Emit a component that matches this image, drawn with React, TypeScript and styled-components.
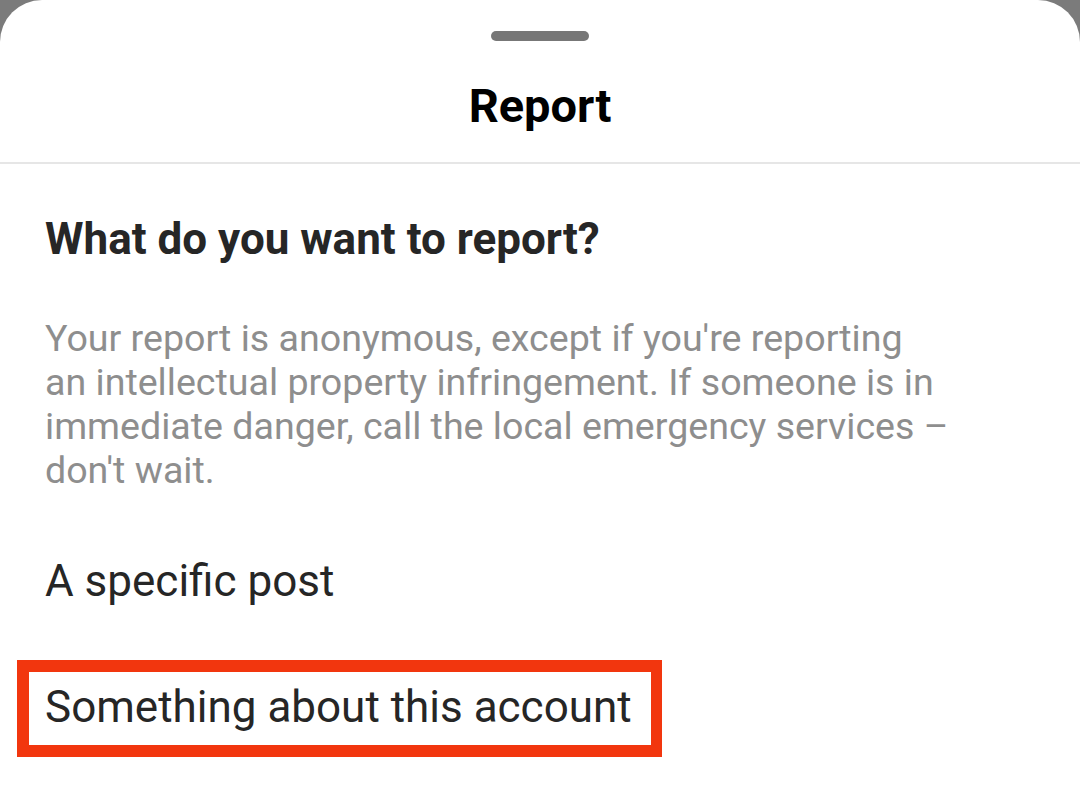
import React from "react";
import styled, { createGlobalStyle } from "styled-components";

const Global = createGlobalStyle`
  html, body { margin: 0; padding: 0; background: #7b7b7b; }
  body { font-family: Roboto, "Noto Sans", Arial, sans-serif; }
  * { box-sizing: border-box; }
`;

const Sheet = styled.div`
  width: 1080px;
  height: 806px;
  background: #ffffff;
  border-radius: 42px 42px 0 0;
  overflow: hidden;
  display: flex;
  flex-direction: column;
`;

const Header = styled.div`
  display: flex;
  flex-direction: column;
  align-items: center;
  height: 164px;
  padding-top: 31px;
  border-bottom: 2px solid #e6e6e6;
`;

const Handle = styled.div`
  width: 98px;
  height: 10px;
  border-radius: 5px;
  background: #777777;
`;

const Title = styled.h1`
  margin: 37px 0 0;
  font-size: 47px;
  line-height: 56px;
  font-weight: 700;
  color: #000;
`;

const Body = styled.div`
  display: flex;
  flex-direction: column;
  padding: 50px 45px 0;
`;

const Question = styled.h2`
  margin: 0;
  font-size: 44px;
  line-height: 50px;
  font-weight: 700;
  color: #262626;
`;

const Note = styled.p`
  margin: 52px 0 0;
  font-size: 37.6px;
  line-height: 44px;
  font-weight: 400;
  color: #8e8e8e;
  max-width: 908px;
`;

const Options = styled.div`
  display: flex;
  flex-direction: column;
  margin-top: 65px;
`;

const Option = styled.div<{ $highlight?: boolean }>`
  font-size: 44px;
  line-height: 48px;
  color: #262626;
  align-self: flex-start;
  ${(p) =>
    p.$highlight
      ? `
    border: 12px solid #f2360e;
    border-right-width: 11px;
    padding: 11px 19px 14px 16px;
    margin: 55px 0 0 -28px;
  `
      : ""}
`;

export default function App() {
  return (
    <>
      <Global />
      <Sheet>
        <Header>
          <Handle />
          <Title>Report</Title>
        </Header>
        <Body>
          <Question>What do you want to report?</Question>
          <Note>
            Your report is anonymous, except if you're reporting an intellectual
            property infringement. If someone is in immediate danger, call the
            local emergency services – don't wait.
          </Note>
          <Options>
            <Option>A specific post</Option>
            <Option $highlight>Something about this account</Option>
          </Options>
        </Body>
      </Sheet>
    </>
  );
}
